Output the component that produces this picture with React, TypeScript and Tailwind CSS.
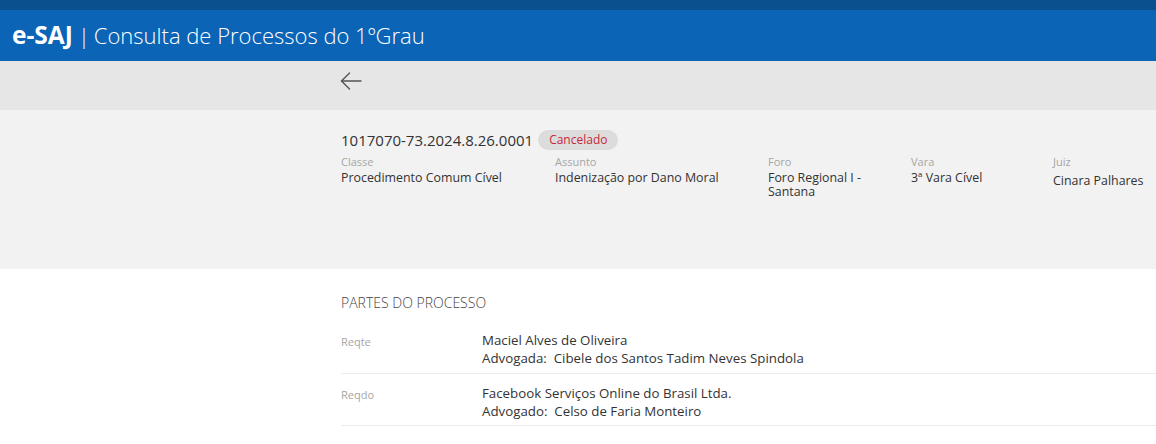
import React from "react";

const font = { fontFamily: '"Open Sans", "Noto Sans", sans-serif' };

function Field({ label, value, w, extra = "" }: { label: string; value: React.ReactNode; w: string; extra?: string }) {
  return (
    <div className={`${w} shrink-0`}>
      <div className="text-[11px] leading-[14px] text-[#a6a6a6]">{label}</div>
      <div className={`text-[12.4px] leading-[14px] text-[#333] mt-[2px] ${extra}`}>{value}</div>
    </div>
  );
}

export default function App() {
  return (
    <div className="w-[1156px] h-[444px] overflow-hidden bg-white" style={font}>
      <div className="h-[10px] bg-[#0a4f8e]" />
      <div className="h-[51px] bg-[#0b64b6] flex items-center pl-[12px] text-white">
        <span className="font-bold text-[24.5px]">e-SAJ</span>
        <span className="font-light text-[22px] ml-[5px]">|</span>
        <span className="font-light text-[22px] ml-[4px]">Consulta de Processos do 1ºGrau</span>
      </div>
      <div className="h-[49px] bg-[#e6e6e6] pl-[340px] pt-[11px]">
        <svg width="22" height="18" viewBox="0 0 22 18" fill="none" stroke="#555" strokeWidth="1.4" strokeLinecap="round" strokeLinejoin="round">
          <path d="M21 9H1.5" />
          <path d="M9.5 1L1.5 9l8 8" />
        </svg>
      </div>
      <div className="h-[159px] bg-[#f2f2f2] pl-[341px] pt-[20px]">
        <div className="flex items-center">
          <span className="text-[15px] text-[#333] leading-[20px]">1017070-73.2024.8.26.0001</span>
          <span className="ml-[5px] bg-[#dcdcdc] rounded-full px-[11px] h-[20px] flex items-center text-[12px] text-[#c8283a]">Cancelado</span>
        </div>
        <div className="flex mt-[5px]">
          <Field label="Classe" value="Procedimento Comum Cível" w="w-[214px]" />
          <Field label="Assunto" value="Indenização por Dano Moral" w="w-[213px]" />
          <Field label="Foro" value={<>Foro Regional I -<br />Santana</>} w="w-[143px]" />
          <Field label="Vara" value="3ª Vara Cível" w="w-[142px]" />
          <Field label="Juiz" value="Cinara Palhares" w="w-[110px]" extra="mt-[5px]" />
        </div>
      </div>
      <div className="pl-[341px] pt-[24px]">
        <div className="text-[14px] text-[#444] font-light leading-[20px]">PARTES DO PROCESSO</div>
        <div className="mt-[18px] flex border-b border-[#ebebeb] pb-[6px]">
          <div className="w-[141px] text-[11px] text-[#a6a6a6] pt-[3px]">Reqte</div>
          <div className="text-[13.3px] text-[#333] leading-[18px]">
            <div>Maciel Alves de Oliveira</div>
            <div>Advogada:&nbsp; Cibele dos Santos Tadim Neves Spindola</div>
          </div>
        </div>
        <div className="pt-[10px] flex border-b border-[#ebebeb] pb-[5px]">
          <div className="w-[141px] text-[11px] text-[#a6a6a6] pt-[3px]">Reqdo</div>
          <div className="text-[13.3px] text-[#333] leading-[18px]">
            <div>Facebook Serviços Online do Brasil Ltda.</div>
            <div>Advogado:&nbsp; Celso de Faria Monteiro</div>
          </div>
        </div>
      </div>
    </div>
  );
}
